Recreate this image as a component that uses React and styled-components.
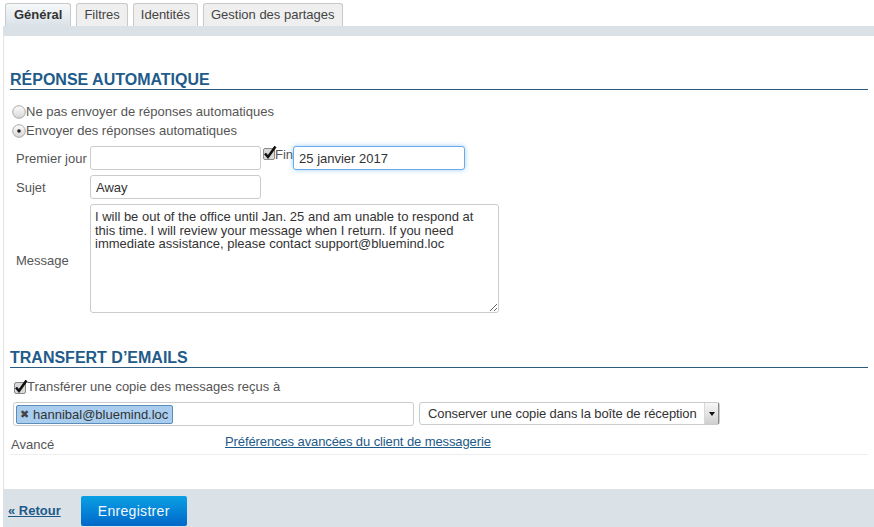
import React from 'react'
import styled, { createGlobalStyle } from 'styled-components'

const GlobalStyle = createGlobalStyle`
  body {
    margin: 0;
    font-family: "Liberation Sans", Arial, sans-serif;
    font-size: 13px;
    color: #555;
    background: #fff;
  }
`

const Page = styled.div`
  width: 871px;
  height: 527px;
  margin-left: 3px;
  display: flex;
  flex-direction: column;
`

const TabBar = styled.div`
  display: flex;
  gap: 5px;
  height: 23px;
  padding: 3px 0 0 2px;
`

const Tab = styled.div`
  padding: 0 ${p => (p.$active ? 8 : 7)}px;
  height: 22px;
  line-height: 22px;
  border: 1px solid #c9c9c9;
  border-bottom: none;
  border-radius: 3px 3px 0 0;
  background: ${p => (p.$active ? 'linear-gradient(#f6f8f9, #dae2e8)' : '#efefef')};
  color: ${p => (p.$active ? '#333' : '#444')};
  font-weight: ${p => (p.$active ? 'bold' : 'normal')};
`

const Strip = styled.div`
  height: 10px;
  background: #dae2e8;
`

const Panel = styled.div`
  flex: 1;
  border-left: 1px solid #e4e4e4;
  padding: 0 6px 0 6px;
`

const Heading = styled.h2`
  margin: ${p => p.$top}px 0 0;
  font-size: 16px;
  line-height: 19px;
  font-weight: bold;
  color: #225b8a;
  border-bottom: 1px solid #2d5b7e;
`

const ChoiceRow = styled.label`
  display: flex;
  align-items: center;
  height: 19px;
  margin-top: ${p => p.$top || 0}px;
  padding-left: ${p => p.$indent || 2}px;
  color: #555;
`

const Form = styled.div`
  display: flex;
  flex-direction: column;
  gap: 5px;
  margin-top: 6px;
  padding-left: 6px;
`

const FormRow = styled.div`
  display: flex;
  align-items: center;
`

const Label = styled.div`
  width: 74px;
  flex-shrink: 0;
  color: #555;
  padding-top: ${p => p.$drop || 0}px;
`

const TextInput = styled.input`
  box-sizing: border-box;
  width: ${p => p.$w}px;
  height: 24px;
  border: 1px solid ${p => (p.$focus ? '#69abe6' : '#cbcbcb')};
  border-radius: 3px;
  padding: 0 5px;
  font: 13px "Liberation Sans", Arial, sans-serif;
  color: #333;
  outline: none;
  box-shadow: ${p => (p.$focus ? '0 0 5px rgba(82, 168, 236, 0.55)' : 'none')};
`

const FinBox = styled.div`
  display: flex;
  align-items: flex-start;
  align-self: flex-start;
  height: 24px;
  margin-left: 1px;
  color: #555;
  & span {
    margin-top: 1px;
    margin-left: -1px;
  }
`

const Message = styled.textarea`
  box-sizing: border-box;
  width: 409px;
  height: 109px;
  border: 1px solid #cbcbcb;
  border-radius: 3px;
  padding: 5px 4px;
  font: 13px/13.6px "Liberation Sans", Arial, sans-serif;
  color: #333;
  resize: both;
  outline: none;
`

const TokenRow = styled.div`
  display: flex;
  gap: 5px;
  margin-top: 6px;
  padding-left: 3px;
`

const TokenField = styled.div`
  box-sizing: border-box;
  width: 401px;
  height: 24px;
  border: 1px solid #cbcbcb;
  border-radius: 3px;
  padding: 1px 2px;
  display: flex;
  align-items: center;
`

const Token = styled.div`
  display: flex;
  align-items: center;
  gap: 4px;
  height: 19px;
  padding: 0 4px 0 3px;
  box-sizing: border-box;
  background: #a8cdef;
  border: 1px solid #5c8cb8;
  border-radius: 2px;
  color: #333;
`

const Remove = styled.span`
  font-size: 11px;
  color: #444;
`

const Select = styled.div`
  box-sizing: border-box;
  width: 301px;
  height: 23px;
  border: 1px solid #cbcbcb;
  border-radius: 3px;
  display: flex;
  align-items: center;
  justify-content: space-between;
  padding-left: 8px;
  color: #333;
  letter-spacing: -0.1px;
`

const Arrow = styled.div`
  width: 13px;
  height: 21px;
  background: linear-gradient(#f7f7f7, #cfcfcf);
  border-left: 1px solid #d8d8d8;
  border-right: 1px solid #888;
  display: flex;
  align-items: center;
  justify-content: center;
  &::after {
    content: '';
    border-left: 3px solid transparent;
    border-right: 3px solid transparent;
    border-top: 4px solid #111;
  }
`

const AdvancedRow = styled.div`
  display: grid;
  grid-template-columns: 214px 1fr;
  height: 24px;
  margin-top: 4px;
  padding-left: 1px;
  border-bottom: 1px solid #eee;
  & > div {
    color: #555;
    align-self: end;
    padding-bottom: 2px;
  }
`

const Link = styled.a`
  color: #1e5a88;
  text-decoration: underline;
  padding-top: 4px;
  letter-spacing: -0.1px;
`

const Footer = styled.div`
  height: 38px;
  background: #dae2e8;
  display: flex;
  align-items: center;
  gap: 20px;
  padding-left: 5px;
`

const Back = styled.a`
  color: #1e5a88;
  font-weight: bold;
  text-decoration: underline;
  margin-top: 4px;
`

const SaveButton = styled.button`
  width: 106px;
  height: 30px;
  margin-top: 6px;
  border: none;
  border-radius: 2px;
  background: linear-gradient(#0aa0e4, #0068c9);
  color: #f4f8fc;
  font: 14px "Liberation Sans", Arial, sans-serif;
  letter-spacing: 0.3px;
`

const Radio = ({ checked }) => (
  <svg width="14" height="14" viewBox="0 0 14 14">
    <defs>
      <linearGradient id="rg" x1="0" y1="0" x2="0" y2="1">
        <stop offset="0" stopColor="#fdfdfd" />
        <stop offset="1" stopColor="#d6d6d6" />
      </linearGradient>
    </defs>
    <circle cx="7" cy="7" r="6.3" fill="url(#rg)" stroke="#a9a9a9" />
    {checked && <circle cx="7" cy="7" r="1.8" fill="#222" />}
  </svg>
)

const Check = () => (
  <svg width="14" height="14" viewBox="0 0 14 14" style={{ overflow: 'visible' }}>
    <rect x="1.5" y="2.5" width="11" height="11" rx="1.5" fill="#d9d9d9" stroke="#8a8a8a" />
    <path d="M3 7.5 L6 11 L13.5 0.5" fill="none" stroke="#111" strokeWidth="2.6" strokeLinejoin="miter" />
  </svg>
)

const App = () => (
  <>
    <GlobalStyle />
    <Page>
      <TabBar>
        <Tab $active>Général</Tab>
        <Tab>Filtres</Tab>
        <Tab>Identités</Tab>
        <Tab>Gestion des partages</Tab>
      </TabBar>
      <Strip />
      <Panel>
        <Heading $top={34}>RÉPONSE AUTOMATIQUE</Heading>
        <ChoiceRow $top={12}>
          <Radio />
          Ne pas envoyer de réponses automatiques
        </ChoiceRow>
        <ChoiceRow>
          <Radio checked />
          Envoyer des réponses automatiques
        </ChoiceRow>
        <Form>
          <FormRow>
            <Label>Premier jour</Label>
            <TextInput $w={171} defaultValue="" />
            <FinBox>
              <Check />
              <span>Fin</span>
            </FinBox>
            <TextInput $w={172} $focus defaultValue="25 janvier 2017" />
          </FormRow>
          <FormRow>
            <Label>Sujet</Label>
            <TextInput $w={171} defaultValue="Away" />
          </FormRow>
          <FormRow>
            <Label $drop={3}>Message</Label>
            <Message defaultValue="I will be out of the office until Jan. 25 and am unable to respond at this time. I will review your message when I return. If you need immediate assistance, please contact support@bluemind.loc" />
          </FormRow>
        </Form>
        <Heading $top={35}>TRANSFERT D’EMAILS</Heading>
        <ChoiceRow $top={9} $indent={3}>
          <Check />
          Transférer une copie des messages reçus à
        </ChoiceRow>
        <TokenRow>
          <TokenField>
            <Token>
              <Remove>✖</Remove>
              hannibal@bluemind.loc
            </Token>
          </TokenField>
          <Select>
            Conserver une copie dans la boîte de réception
            <Arrow />
          </Select>
        </TokenRow>
        <AdvancedRow>
          <div>Avancé</div>
          <Link>Préférences avancées du client de messagerie</Link>
        </AdvancedRow>
      </Panel>
      <Footer>
        <Back>« Retour</Back>
        <SaveButton>Enregistrer</SaveButton>
      </Footer>
    </Page>
  </>
)

export default App
